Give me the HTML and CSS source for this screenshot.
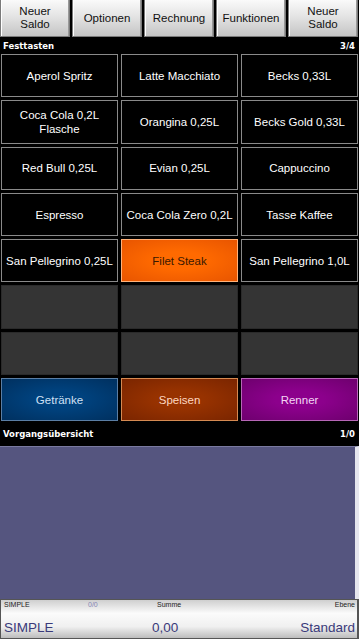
FILE: index.html
```html
<!DOCTYPE html>
<html lang="de">
<head>
  <meta charset="UTF-8">
  <meta name="viewport" content="width=device-width, initial-scale=1.0">
  <title>Kasse</title>
  <link rel="stylesheet" href="styles.css">
</head>
<body>
  <div class="app">
    <!-- Top menu -->
    <div class="menu-bar">
      <button class="menu-btn">Neuer<br>Saldo</button>
      <button class="menu-btn">Optionen</button>
      <button class="menu-btn">Rechnung</button>
      <button class="menu-btn">Funktionen</button>
      <button class="menu-btn">Neuer<br>Saldo</button>
    </div>

    <!-- Festtasten -->
    <div class="section-head">
      <span>Festtasten</span>
      <span>3/4</span>
    </div>

    <div class="key-grid">
      <div class="key">Aperol Spritz</div>
      <div class="key">Latte Macchiato</div>
      <div class="key">Becks 0,33L</div>
      <div class="key">Coca Cola 0,2L<br>Flasche</div>
      <div class="key">Orangina 0,25L</div>
      <div class="key">Becks Gold 0,33L</div>
      <div class="key">Red Bull 0,25L</div>
      <div class="key">Evian 0,25L</div>
      <div class="key">Cappuccino</div>
      <div class="key">Espresso</div>
      <div class="key">Coca Cola Zero 0,2L</div>
      <div class="key">Tasse Kaffee</div>
      <div class="key">San Pellegrino 0,25L</div>
      <div class="key key-food">Filet Steak</div>
      <div class="key">San Pellegrino 1,0L</div>
      <div class="key key-empty"></div>
      <div class="key key-empty"></div>
      <div class="key key-empty"></div>
      <div class="key key-empty"></div>
      <div class="key key-empty"></div>
      <div class="key key-empty"></div>
      <div class="key cat-drinks">Getränke</div>
      <div class="key cat-food">Speisen</div>
      <div class="key cat-top">Renner</div>
    </div>

    <!-- Vorgangsübersicht -->
    <div class="section-head section-head-2">
      <span>Vorgangsübersicht</span>
      <span>1/0</span>
    </div>

    <div class="overview"></div>

    <!-- Status footer -->
    <div class="status">
      <div class="status-row status-small">
        <span class="col-a">SIMPLE</span>
        <span class="col-b count">0/0</span>
        <span class="col-c">Summe</span>
        <span class="col-d">Ebene</span>
      </div>
      <div class="status-row status-big">
        <span class="col-a">SIMPLE</span>
        <span class="col-b"></span>
        <span class="col-c">0,00</span>
        <span class="col-d">Standard</span>
      </div>
    </div>
  </div>
</body>
</html>
```

FILE: styles.css
```css
/* Reset */
* {
  margin: 0;
  padding: 0;
  box-sizing: border-box;
}

body {
  font-family: "Liberation Sans", Arial, sans-serif;
  background-color: #000;
  color: #fff;
  width: 359px;
  height: 639px;
  overflow: hidden;
}

.app {
  display: flex;
  flex-direction: column;
  height: 639px;
}

/* Top menu */
.menu-bar {
  display: flex;
  gap: 2px;
  height: 37px;
  padding-right: 1px;
}

.menu-btn {
  flex: 1;
  font-family: "Liberation Sans", Arial, sans-serif;
  font-size: 11.5px;
  line-height: 13px;
  color: #111;
  background: linear-gradient(#fafafa, #e4e4e4 45%, #c4c4c4);
  border: 1px solid #7a7a7a;
  border-top: none;
  box-shadow: inset 1px 0 0 #fff, inset -1px 0 0 #999;
}

/* Section headers */
.section-head {
  display: flex;
  justify-content: space-between;
  align-items: center;
  height: 17px;
  padding: 0 4px 0 3px;
  font-family: "DejaVu Sans", Verdana, sans-serif;
  font-size: 8.5px;
  font-weight: bold;
}

.section-head-2 {
  height: 25px;
}

/* Key grid */
.key-grid {
  display: grid;
  grid-template-columns: repeat(3, 117px);
  grid-auto-rows: 43.3px;
  column-gap: 3px;
  row-gap: 3px;
  padding-left: 1px;
}

.key {
  display: flex;
  align-items: center;
  justify-content: center;
  text-align: center;
  font-size: 11.5px;
  line-height: 14px;
  background-color: #000;
  border: 1.5px solid #8a8a8a;
  color: #fff;
}

.key-empty {
  background-color: #343434;
  border: 1px solid #2a2a2a;
}

.key-food {
  background: radial-gradient(ellipse at center, #ff6a00 30%, #e85500 100%);
  border: 1px solid #ffb27a;
  color: #3a1800;
}

.cat-drinks {
  background: radial-gradient(ellipse at center, #00427e 30%, #00305f 100%);
  border: 1px solid #5b7ea4;
  color: #cfe0f4;
}

.cat-food {
  background: radial-gradient(ellipse at center, #973200 30%, #7a2500 100%);
  border: 1px solid #d58a52;
  color: #ffd8c0;
}

.cat-top {
  background: radial-gradient(ellipse at center, #8c008c 30%, #6e006e 100%);
  border: 1px solid #b667b6;
  color: #f4d6f4;
}

/* Overview panel */
.overview {
  height: 153px;
  background-color: #55557f;
  border-top: 1px solid #7a7aa0;
  border-right: 4px solid #e6e6ee;
}

/* Status footer */
.status {
  flex: 1;
  display: flex;
  flex-direction: column;
  background: linear-gradient(#cfcfcf, #fbfbfb 35%, #f0f0f0 70%, #bdbdbd);
  border: 1px solid #555;
  border-right-width: 2px;
  padding: 1px 2px 0 3px;
  color: #3a3a7a;
}

.status-row {
  display: grid;
  grid-template-columns: 78px 62px 1fr 70px;
  align-items: baseline;
}

.status-small {
  font-size: 7px;
  height: 12px;
  color: #222;
}

.status-small .count {
  color: #8585b5;
  padding-left: 6px;
}

.status-small .col-c {
  padding-left: 13px;
}

.status-big {
  font-size: 13.5px;
  margin-top: 7px;
}

.status-big .col-c {
  padding-left: 8px;
}

.col-d {
  text-align: right;
}
```
